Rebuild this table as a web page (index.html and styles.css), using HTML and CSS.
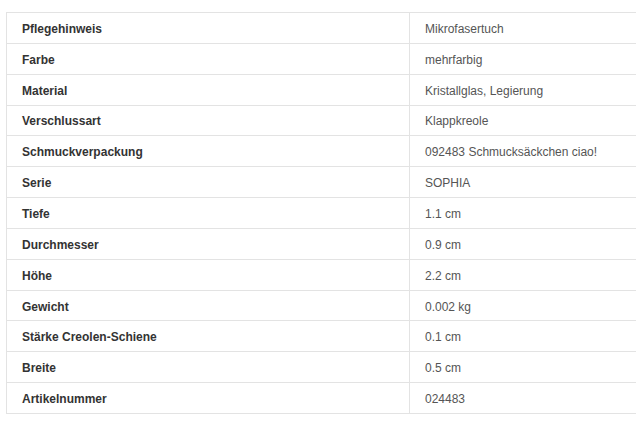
FILE: index.html
```html
<!DOCTYPE html>
<html lang="de">
<head>
<meta charset="utf-8">
<link rel="stylesheet" href="styles.css">
</head>
<body>
<div class="wrap">
<table class="specs">
<colgroup><col class="c-label"><col class="c-value"></colgroup>
<tbody>
<tr><th>Pflegehinweis</th><td>Mikrofasertuch</td></tr>
<tr><th>Farbe</th><td>mehrfarbig</td></tr>
<tr><th>Material</th><td>Kristallglas, Legierung</td></tr>
<tr><th>Verschlussart</th><td>Klappkreole</td></tr>
<tr><th>Schmuckverpackung</th><td>092483 Schmucksäckchen ciao!</td></tr>
<tr><th>Serie</th><td>SOPHIA</td></tr>
<tr><th>Tiefe</th><td>1.1 cm</td></tr>
<tr><th>Durchmesser</th><td>0.9 cm</td></tr>
<tr><th>Höhe</th><td>2.2 cm</td></tr>
<tr><th>Gewicht</th><td>0.002 kg</td></tr>
<tr><th>Stärke Creolen-Schiene</th><td>0.1 cm</td></tr>
<tr><th>Breite</th><td>0.5 cm</td></tr>
<tr><th>Artikelnummer</th><td>024483</td></tr>
</tbody>
</table>
</div>
</body>
</html>
```
FILE: styles.css
```css
html, body {
  margin: 0;
  padding: 0;
  background: #fff;
}
.wrap {
  width: 636px;
  overflow: hidden;
  padding: 12px 0 0 6px;
  box-sizing: border-box;
}
.specs {
  border-collapse: collapse;
  width: 700px;
  table-layout: fixed;
  font-family: "Liberation Sans", Arial, sans-serif;
  font-size: 12px;
}
.c-label { width: 403px; }
.specs th,
.specs td {
  border: 1px solid #e3e3e3;
  padding: 3px 15px 0;
  height: 29.85px;
  box-sizing: border-box;
  line-height: 17px;
  text-align: left;
  vertical-align: middle;
}
.specs tr { height: 30.85px; }
.specs th {
  font-weight: bold;
  color: #333;
}
.specs td {
  font-weight: normal;
  color: #555;
}
```
